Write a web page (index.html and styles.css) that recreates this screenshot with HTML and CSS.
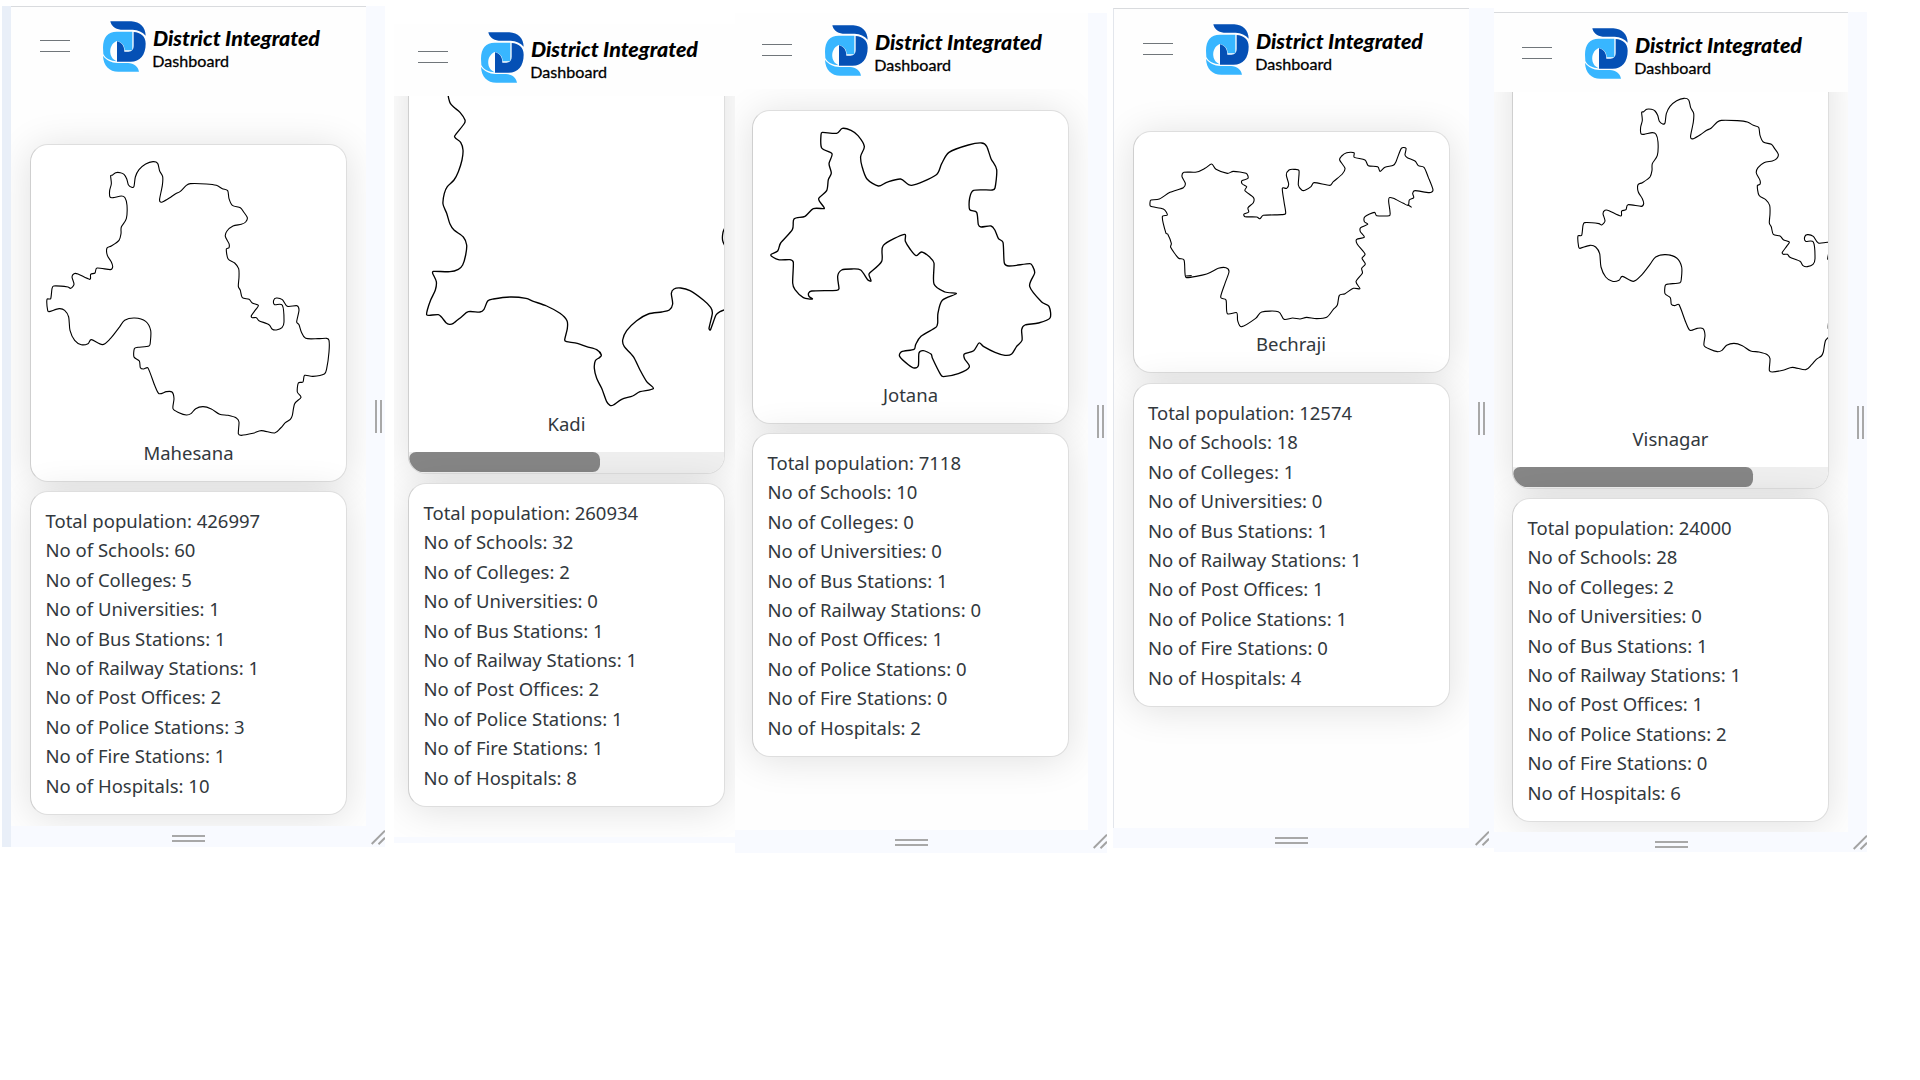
FILE: index.html
```html
<!DOCTYPE html>
<html lang="en">
<head>
<meta charset="utf-8">
<title>District Integrated Dashboard</title>
<link rel="stylesheet" href="styles.css">
</head>
<body>
<svg class="defs" aria-hidden="true">
  <symbol id="brand" viewBox="309 64 654 153">
    <path fill="#0550b5" d="M331 65H394C420 66 437 84 437 108C428 97 414 91 398 90H362C345 89 334 79 331 65Z"/>
    <path fill="#38b6ff" d="M309 144C309 112 324 96 350 96H397V152H374C374 138 366 127 350 124C336 130 329 145 331 160C333 174 341 181 351 185C332 184 316 176 310 163Z"/>
    <path fill="#0550b5" d="M401 97C422 98 437 110 437 132C437 166 420 186 392 186H351V125C365 128 373 138 373 156H385C396 155 401 149 401 138Z"/>
    <path fill="#38b6ff" d="M309 168C319 182 334 189 352 190H384C402 191 414 200 417 216H355C328 216 310 198 309 168Z"/>
    <text class="brand-name" x="459" y="139" textLength="501" lengthAdjust="spacingAndGlyphs">District Integrated</text>
    <text class="brand-sub" x="457" y="201" textLength="230" lengthAdjust="spacingAndGlyphs">Dashboard</text>
  </symbol>
  <symbol id="grip" viewBox="0 0 14 15"><path fill="none" stroke="#a3a3a3" stroke-width="2" d="M0.7 14L14 .7M7.5 14.3L14 7.8"/></symbol>
</svg>

<main class="board">
  <section class="panel mahesana">
    <div class="screen">
      <header class="topbar"><span class="menu"></span><svg class="brand"><use href="#brand"/></svg></header>
      <article class="card map">
        <svg class="shape fine" viewBox="34 44 945 879"><path id="district" data-closed="1" data-points="273,136 279,134 288,127 302,127 313,132 321,145 326,163 336,171 343,168 347,140 358,118 378,101 400,94 414,99 420,122 429,139 428,165 420,205 421,214 428,215 449,203 468,190 482,183 500,165 512,160 560,161 590,165 608,175 624,181 628,205 638,225 662,232 672,245 683,262 678,275 665,282 640,287 622,302 617,318 628,340 628,352 620,356 625,385 645,398 657,415 658,440 656,468 662,480 668,502 688,507 698,518 716,525 708,538 695,556 698,562 710,562 718,571 748,583 757,596 770,599 787,592 793,575 788,525 765,523 762,510 770,503 788,508 803,528 832,526 838,540 831,575 838,583 845,605 858,624 895,625 921,624 928,630 928,665 921,715 914,731 880,738 855,735 850,755 836,758 833,785 844,801 825,820 818,855 812,867 797,877 783,893 765,908 725,901 700,909 665,915 656,910 658,875 650,863 625,855 600,852 575,836 550,829 528,835 514,850 500,854 478,847 460,835 463,805 457,785 440,784 418,790 405,765 385,713 372,716 362,712 359,692 343,680 344,655 355,651 388,647 392,635 393,600 378,573 345,563 315,570 298,592 272,625 248,643 215,628 205,640 185,643 165,630 151,600 147,560 135,540 118,535 88,544 84,540 82,507 93,505 97,475 102,467 145,470 153,474 163,462 157,440 163,430 175,431 210,447 213,432 226,428 232,413 272,418 279,410 275,395 263,375 262,353 275,347 298,330 304,310 305,290 320,265 322,225 316,202 305,197 280,202 271,200 270,180 275,160"/></svg>
        <h2>Mahesana</h2>
      </article>
      <ul class="card stats">
        <li>Total population: 426997</li><li>No of Schools: 60</li><li>No of Colleges: 5</li><li>No of Universities: 1</li><li>No of Bus Stations: 1</li><li>No of Railway Stations: 1</li><li>No of Post Offices: 2</li><li>No of Police Stations: 3</li><li>No of Fire Stations: 1</li><li>No of Hospitals: 10</li>
      </ul>
    </div>
    <div class="side"><span class="bars upright"></span></div>
    <div class="foot"><span class="bars"></span></div>
    <svg class="grip"><use href="#grip"/></svg>
  </section>

  <section class="panel kadi">
    <div class="screen">
      <header class="topbar"><span class="menu"></span><svg class="brand"><use href="#brand"/></svg></header>
      <article class="card map">
        <svg class="shape" viewBox="57 168 945 1059"><path data-points="174,240 174,280 176,295 181,310 192,322 210,337 225,360 222,372 194,408 197,415 212,427 219,450 216,480 205,515 192,540 172,560 163,580 159,612 170,640 180,672 192,690 220,711 230,735 227,765 218,795 205,808 180,815 130,814 128,820 139,845 136,870 122,900 112,930 110,944 118,946 145,944 155,952 168,968 178,973 190,970 215,950 235,935 270,936 282,928 293,903 310,897 360,891 408,895 430,904 470,918 510,940 531,962 532,985 524,1020 530,1025 562,1030 590,1040 620,1049 634,1065 628,1073 616,1082 613,1105 620,1135 635,1165 650,1205 660,1216 670,1215 695,1198 728,1188 750,1175 790,1166 770,1145 750,1110 730,1070 703,1040 698,1020 710,992 740,962 775,942 815,936 838,930 848,912 844,880 852,867 872,864 900,872 940,900 962,922 967,940 957,985 961,990 978,945 990,935 1010,927"/><path data-points="1008,676 999,697 998,722 1008,744"/></svg>
        <h2>Kadi</h2>
        <div class="scroll"><i></i></div>
      </article>
      <ul class="card stats">
        <li>Total population: 260934</li><li>No of Schools: 32</li><li>No of Colleges: 2</li><li>No of Universities: 0</li><li>No of Bus Stations: 1</li><li>No of Railway Stations: 1</li><li>No of Post Offices: 2</li><li>No of Police Stations: 1</li><li>No of Fire Stations: 1</li><li>No of Hospitals: 8</li>
      </ul>
    </div>
    <div class="foot"></div>
  </section>

  <section class="panel jotana">
    <div class="screen">
      <header class="topbar"><span class="menu"></span><svg class="brand"><use href="#brand"/></svg></header>
      <article class="card map">
        <svg class="shape" viewBox="54 64 945 807"><path data-closed="1" data-points="258,135 262,128 305,131 322,116 348,122 369,138 388,170 377,200 381,230 396,268 430,289 455,278 497,268 530,287 603,256 620,222 642,188 700,166 740,160 755,170 768,207 785,240 780,295 772,301 716,302 704,325 704,360 725,368 730,405 738,412 768,409 780,422 790,446 804,458 808,520 822,529 885,522 893,530 899,550 884,590 920,637 942,650 945,685 910,700 870,706 860,720 861,752 845,770 830,793 810,797 780,788 745,770 732,760 716,783 688,793 689,808 703,832 670,852 625,861 617,855 592,805 588,793 565,783 552,790 550,828 538,835 520,825 494,800 500,786 537,779 542,765 558,740 603,713 608,700 609,670 622,632 664,612 630,607 597,583 597,520 585,503 560,487 543,498 525,478 511,455 508,434 445,467 440,515 404,550 402,556 408,574 398,570 377,541 350,538 320,541 308,560 312,597 305,602 230,604 221,610 222,620 232,628 205,624 180,600 173,580 175,518 165,510 130,510 107,496 128,484 137,460 172,420 177,388 210,380 235,357 267,357 265,350 251,327 275,303 280,270 289,250 282,222 291,192 260,175"/></svg>
        <h2>Jotana</h2>
      </article>
      <ul class="card stats">
        <li>Total population: 7118</li><li>No of Schools: 10</li><li>No of Colleges: 0</li><li>No of Universities: 0</li><li>No of Bus Stations: 1</li><li>No of Railway Stations: 0</li><li>No of Post Offices: 1</li><li>No of Police Stations: 0</li><li>No of Fire Stations: 0</li><li>No of Hospitals: 2</li>
      </ul>
    </div>
    <div class="side"><span class="bars upright"></span></div>
    <div class="foot"><span class="bars"></span></div>
    <svg class="grip"><use href="#grip"/></svg>
  </section>

  <section class="panel bechraji">
    <div class="screen">
      <header class="topbar"><span class="menu"></span><svg class="brand"><use href="#brand"/></svg></header>
      <article class="card map">
        <svg class="shape fine" viewBox="72 66 945 591"><path data-closed="1" data-points="123,270 148,267 180,247 220,233 226,220 216,200 222,187 260,186 285,175 305,162 318,178 352,190 370,184 408,190 414,205 396,212 397,222 410,230 405,242 430,262 430,278 414,293 416,306 402,312 405,320 440,321 450,326 460,316 515,314 527,310 522,275 517,235 530,235 536,222 529,195 537,180 552,178 567,182 565,225 575,240 585,241 603,230 612,218 660,226 670,215 697,192 705,175 689,150 695,138 710,128 732,128 733,142 765,150 775,167 803,170 810,184 825,172 850,166 858,155 874,115 888,115 885,135 892,143 915,153 925,167 942,172 955,202 969,240 958,248 915,242 908,250 911,263 898,270 895,286 880,280 850,265 838,263 836,275 840,305 838,317 800,317 793,307 765,320 763,335 773,343 752,353 751,365 763,382 740,388 742,403 765,432 756,445 766,462 755,475 757,490 738,515 750,536 730,535 705,551 688,556 682,585 670,598 650,622 620,626 590,622 570,627 548,624 522,628 505,605 455,606 437,625 395,650 383,632 380,608 352,611 348,570 332,562 345,520 357,485 348,473 325,475 290,492 230,503 225,490 222,450 205,444 182,412 184,400 173,372 168,370 157,320 172,315 160,297 122,289 120,278"/><path data-points="228,498 245,497"/><path data-points="893,284 905,292"/></svg>
        <h2>Bechraji</h2>
      </article>
      <ul class="card stats">
        <li>Total population: 12574</li><li>No of Schools: 18</li><li>No of Colleges: 1</li><li>No of Universities: 0</li><li>No of Bus Stations: 1</li><li>No of Railway Stations: 1</li><li>No of Post Offices: 1</li><li>No of Police Stations: 1</li><li>No of Fire Stations: 0</li><li>No of Hospitals: 4</li>
      </ul>
    </div>
    <div class="side"><span class="bars upright"></span></div>
    <div class="foot"><span class="bars"></span></div>
    <svg class="grip"><use href="#grip"/></svg>
  </section>

  <section class="panel visnagar">
    <div class="screen">
      <header class="topbar"><span class="menu"></span><svg class="brand"><use href="#brand"/></svg></header>
      <article class="card map">
        <svg class="shape fine" viewBox="-113 -42 945 1113"><use href="#district"/></svg>
        <h2>Visnagar</h2>
        <div class="scroll"><i></i></div>
      </article>
      <ul class="card stats">
        <li>Total population: 24000</li><li>No of Schools: 28</li><li>No of Colleges: 2</li><li>No of Universities: 0</li><li>No of Bus Stations: 1</li><li>No of Railway Stations: 1</li><li>No of Post Offices: 1</li><li>No of Police Stations: 2</li><li>No of Fire Stations: 0</li><li>No of Hospitals: 6</li>
      </ul>
    </div>
    <div class="side"><span class="bars upright"></span></div>
    <div class="foot"><span class="bars"></span></div>
    <svg class="grip"><use href="#grip"/></svg>
  </section>
</main>
<script src="outline.js"></script>
</body>
</html>
```

FILE: outline.js
```js
// Turns each boundary's point list into a smooth curve through its points.
document.querySelectorAll('path[data-points]').forEach(function (path) {
  var pts = path.dataset.points.split(' ').map(function (p) { return p.split(',').map(Number); });
  var closed = path.dataset.closed === '1';
  var n = pts.length;
  var at = function (i) {
    return closed ? pts[(i + n) % n] : pts[Math.max(0, Math.min(n - 1, i))];
  };
  var d = 'M' + pts[0];
  var k = 7;
  for (var i = 0; i < (closed ? n : n - 1); i++) {
    var a = at(i - 1), b = at(i), c = at(i + 1), e = at(i + 2);
    // limit handle length so short steps beside long ones do not overshoot
    var len = Math.hypot(c[0] - b[0], c[1] - b[1]);
    var handle = function (p, q) {
      var x = (q[0] - p[0]) / k, y = (q[1] - p[1]) / k, h = Math.hypot(x, y) || 1;
      var s = Math.min(1, len * 0.36 / h);
      return [x * s, y * s];
    };
    var h1 = handle(a, c), h2 = handle(b, e);
    d += 'C' + [b[0] + h1[0], b[1] + h1[1], c[0] - h2[0], c[1] - h2[1], c[0], c[1]].map(function (v) { return v.toFixed(1); }).join(' ');
  }
  path.setAttribute('d', d + (closed ? 'Z' : ''));
});
```

FILE: styles.css
```css
* { box-sizing: border-box; margin: 0; padding: 0; }

body {
  width: 1920px;
  height: 1080px;
  overflow: hidden;
  background: #fff;
  color: #32383d;
  font: 18.5px/29.4px "Noto Sans", sans-serif;
}

.defs { position: absolute; width: 0; height: 0; }

.board { display: flex; align-items: flex-start; padding-left: 2px; }

.panel {
  position: relative;
  display: grid;
  flex: none;
  background: #f8faff;
}

.screen {
  overflow: hidden;
  background: #fefefe;
  border-top: 1px solid #d9dbde;
}

.topbar {
  position: relative;
  z-index: 1;
  display: flex;
  align-items: flex-end;
  height: var(--bar);
  padding: 0 0 13px calc(var(--inset) + 10px);
  gap: 33px;
  background: #fefefe;
}

.menu {
  width: 30px;
  height: 12px;
  margin-bottom: 20.5px;
  border: solid #70767a;
  border-width: 1.5px 0;
}

.brand { width: 218px; height: 51px; }

.brand-name { font: italic 900 61px Lato, sans-serif; }
.brand-sub { font: 400 46px Lato, sans-serif; stroke: #000; stroke-width: .8px; }

.card {
  width: 317px;
  margin-left: var(--inset);
  background: #fff;
  border: 1px solid #dedede;
  border-left-color: #cfcfcf;
  border-radius: 18px;
  box-shadow: 0 3px 38px rgba(0, 0, 0, .12);
}

.map {
  display: flex;
  flex-direction: column;
  margin-top: var(--lead);
  overflow: hidden;
}

.shape {
  width: 315px;
  flex: none;
  fill: none;
  stroke: #000;
  stroke-width: 4px;
  stroke-linejoin: round;
}
.shape.fine { stroke: #000; stroke-width: 3.3px; }

h2 {
  height: 43px;
  padding-bottom: 13px;
  font-size: inherit;
  font-weight: 400;
  text-align: center;
}

.scroll { height: 21px; background: #efefef; }
.scroll i { display: block; width: var(--thumb); height: 20px; background: #868686; border-radius: 10px 10px 10px 18px; }

.stats {
  position: relative;
  height: 324px;
  margin-top: var(--gap, 9px);
  padding: 14px 0 0 14.5px;
  list-style: none;
}

.side {
  grid-column: 2;
  grid-row: 1;
  display: flex;
  align-items: center;
  padding-left: 9px;
}

.foot {
  display: flex;
  justify-content: center;
  padding-top: 9px;
  grid-column: 1;
}

.bars { width: 33px; height: 7px; border: solid #a8a8a8; border-width: 2.5px 0; }
.bars.upright { width: 7px; height: 33px; border-width: 0 2.5px; }

.grip { position: absolute; right: var(--grip, 0); bottom: 2px; width: 14px; height: 15px; }

.mahesana {
  --bar: 78px; --inset: 19px; --lead: 59px;
  margin-top: 6px;
  grid-template: 820px 21px / 355px 19px;
  border-left: 9px solid #e9eff8;
}
.kadi {
  --bar: 72px; --inset: 14px; --lead: -41px; --thumb: 191px;
  margin: 24px 0 0 9px;
  grid-template: 813px 6px / 341px;
}
.kadi .screen { border-top: 0; }
.jotana {
  --bar: 76px; --inset: 17px; --lead: 21px;
  margin-top: 13px;
  grid-template: 817px 23px / 353px 19px;
}
.jotana .screen { border-top: 0; }
.jotana .grip { bottom: 4px; }
.bechraji {
  --bar: 79px; --inset: 18.5px; --lead: 43px; --grip: 5px; --gap: 10px;
  margin: 8px 0 0 6px;
  grid-template: 820px 20px / 356px 25px;
}
.bechraji .screen { border-left: 1px solid #e3e6ec; }
.visnagar {
  --bar: 79px; --inset: 18px; --lead: -40px; --thumb: 240px;
  margin-top: 12px;
  grid-template: 820px 20px / 354px 19px;
}
```
